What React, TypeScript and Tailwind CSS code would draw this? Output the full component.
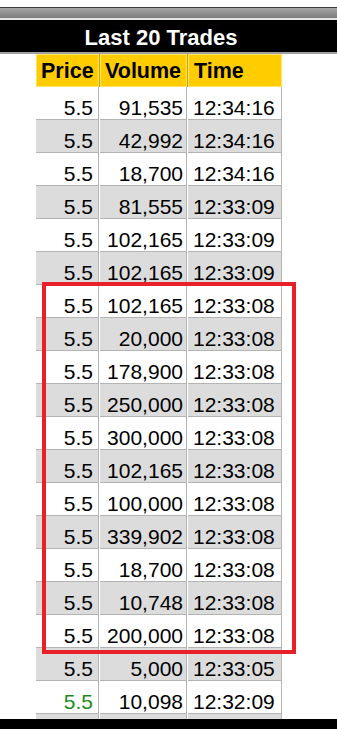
const trades = [
  { price: '5.5', volume: '91,535', time: '12:34:16' },
  { price: '5.5', volume: '42,992', time: '12:34:16' },
  { price: '5.5', volume: '18,700', time: '12:34:16' },
  { price: '5.5', volume: '81,555', time: '12:33:09' },
  { price: '5.5', volume: '102,165', time: '12:33:09' },
  { price: '5.5', volume: '102,165', time: '12:33:09' },
  { price: '5.5', volume: '102,165', time: '12:33:08' },
  { price: '5.5', volume: '20,000', time: '12:33:08' },
  { price: '5.5', volume: '178,900', time: '12:33:08' },
  { price: '5.5', volume: '250,000', time: '12:33:08' },
  { price: '5.5', volume: '300,000', time: '12:33:08' },
  { price: '5.5', volume: '102,165', time: '12:33:08' },
  { price: '5.5', volume: '100,000', time: '12:33:08' },
  { price: '5.5', volume: '339,902', time: '12:33:08' },
  { price: '5.5', volume: '18,700', time: '12:33:08' },
  { price: '5.5', volume: '10,748', time: '12:33:08' },
  { price: '5.5', volume: '200,000', time: '12:33:08' },
  { price: '5.5', volume: '5,000', time: '12:33:05' },
  { price: '5.5', volume: '10,098', time: '12:32:09', up: true },
  { price: '', volume: '', time: '' },
];

export default function App() {
  return (
    <div
      className="relative w-[337px] h-[729px] overflow-hidden bg-white"
      style={{ fontFamily: '"Liberation Sans", Arial, sans-serif' }}
    >
      {/* top chrome */}
      <div className="h-[7px] bg-white" />
      <div className="h-px bg-[#3a3a3a]" />
      <div className="h-[10px] bg-gradient-to-b from-[#a6a6a6] to-[#7c7c7c]" />
      <div className="h-[2px] bg-[#e6e6e6]" />
      <div className="h-[32px] bg-black flex items-center justify-center pr-[15px] pt-[3px]">
        <span className="text-white font-bold text-[22px] leading-none">Last 20 Trades</span>
      </div>
      <div className="h-[2px] bg-[#a0a0a0]" />

      {/* table */}
      <div className="ml-[36px] w-[246px]">
        <div className="flex gap-px h-[33px] bg-[#c9a400]">
          <div className="w-[63px] bg-[#ffcc00] border border-[#ffe46a] pl-[4px] pt-[6px] text-[21.5px] font-bold leading-none text-black">Price</div>
          <div className="w-[87px] bg-[#ffcc00] border border-[#ffe46a] pl-[4px] pt-[6px] text-[21.5px] font-bold leading-none text-black">Volume</div>
          <div className="w-[94px] bg-[#ffcc00] border border-[#ffe46a] pl-[5px] pt-[6px] text-[21.5px] font-bold leading-none text-black">Time</div>
        </div>

        <div className="h-[632px] overflow-hidden">
          {trades.map((t, i) => {
            const bg = i % 2 === 1 ? 'bg-[#dcdcdc]' : 'bg-white';
            return (
              <div key={i} className="flex gap-px h-[33px] bg-white">
                <div className={`w-[63px] ${bg} border-r border-b border-[#b4b4b4] text-right pr-[5px] pt-[10px] text-[21px] leading-none ${t.up ? 'text-[#1e8a1e]' : 'text-black'}`}>
                  {t.price}
                </div>
                <div className={`w-[87px] ${bg} border-r border-b border-[#b4b4b4] text-right pr-[3px] pt-[10px] text-[21px] leading-none text-black`}>
                  {t.volume}
                </div>
                <div className={`w-[94px] ${bg} border-r border-b border-[#b4b4b4] pl-[5px] pt-[10px] text-[21px] leading-none text-black`}>
                  {t.time}
                </div>
              </div>
            );
          })}
        </div>
      </div>

      <div className="h-[12px] bg-black" />

      {/* highlight annotation */}
      <div className="absolute top-[282px] left-[42px] w-[254px] h-[372px] border-[4px] border-[#e8202a] pointer-events-none" />
    </div>
  );
}
